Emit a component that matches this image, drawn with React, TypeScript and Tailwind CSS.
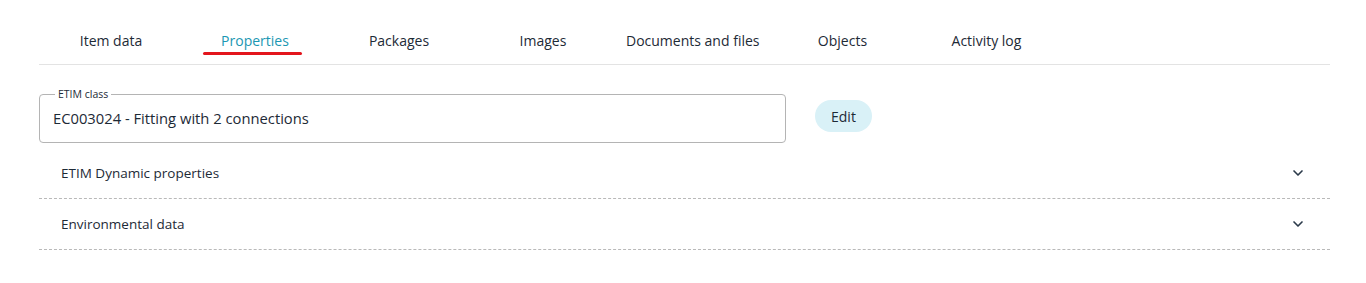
import { ChevronDown } from 'lucide-react';

const TABS = [
  'Item data',
  'Properties',
  'Packages',
  'Images',
  'Documents and files',
  'Objects',
  'Activity log',
];

const SECTIONS = ['ETIM Dynamic properties', 'Environmental data'];

export default function App() {
  const active = 'Properties';

  return (
    <div className="min-h-[283px] bg-white pl-[39px] pr-[36px] pt-[24px] font-['Open_Sans',sans-serif] text-[#1d2a36]">
      <nav className="flex border-b border-[#e3e3e3]">
        {TABS.map((t) => (
          <button
            key={t}
            className={
              'relative min-w-[144px] px-[11px] pb-[14px] pt-[7px] text-center text-[14px] leading-[19px] ' +
              (t === active ? 'text-[#1b97b3]' : 'text-[#1d2a36]')
            }
          >
            {t}
            {t === active && (
              <span className="absolute bottom-[9px] left-[20px] right-[25px] h-[3px] rounded-full bg-[#e3151d]" />
            )}
          </button>
        ))}
      </nav>

      <div className="mt-[23px] flex items-center gap-[29px]">
        <fieldset className="h-[55px] w-[747px] rounded-[4px] border border-[#b4b4b4] px-[13px]">
          <legend className="ml-[2px] px-[3px] text-[10.5px] leading-[12px] text-[#1d2a36]">ETIM class</legend>
          <div className="mt-[9px] text-[14.75px] leading-[19px]">EC003024 - Fitting with 2 connections</div>
        </fieldset>
        <button className="mt-[1px] h-[32px] rounded-full bg-[#d9f1f7] px-[16px] text-[14px] text-[#1d2a36]">
          Edit
        </button>
      </div>

      <div className="mt-[5px]">
        {SECTIONS.map((s) => (
          <div
            key={s}
            className="flex h-[51px] items-center justify-between border-b border-dashed border-[#b9b9b9] pl-[22px] pr-[24px]"
          >
            <span className="text-[13.5px] leading-[19px]">{s}</span>
            <ChevronDown size={16} strokeWidth={2.5} className="text-[#2b3a4a]" />
          </div>
        ))}
      </div>
    </div>
  );
}
